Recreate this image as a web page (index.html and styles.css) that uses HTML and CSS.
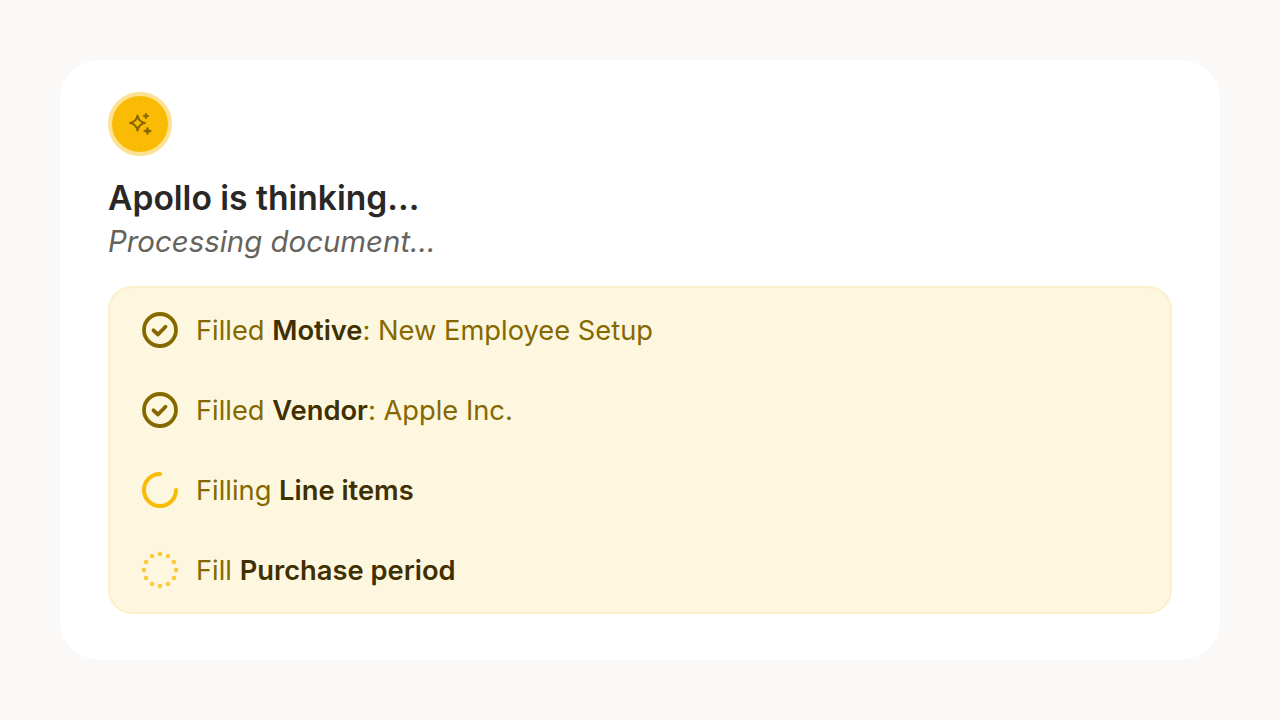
FILE: index.html
```html
<!DOCTYPE html>
<html lang="en">
<head>
    <meta charset="UTF-8">
    <title>Apollo is thinking</title>
    <link rel="stylesheet" href="styles.css">
</head>
<body>
    <div class="card">
        <div class="avatar">
            <svg width="24" height="24" viewBox="0 0 24 24" fill="none">
                <path d="M9.5 3.5 Q10.6 9.9 17 11 Q10.6 12.1 9.5 18.5 Q8.4 12.1 2 11 Q8.4 9.9 9.5 3.5 Z" stroke="#856900" stroke-width="2" stroke-linejoin="round"/>
                <path d="M18 1 Q18.5 3.5 21 4 Q18.5 4.5 18 7 Q17.5 4.5 15 4 Q17.5 3.5 18 1 Z" fill="#856900" stroke="#856900" stroke-width="0.8" stroke-linejoin="round"/>
                <path d="M19.5 15 Q20.2 18.3 23.5 19 Q20.2 19.7 19.5 23 Q18.8 19.7 15.5 19 Q18.8 18.3 19.5 15 Z" fill="#856900" stroke="#856900" stroke-width="0.8" stroke-linejoin="round"/>
            </svg>
        </div>
        <h1 class="title">Apollo is thinking...</h1>
        <p class="subtitle">Processing document...</p>
        <div class="steps">
            <div class="step">
                <svg class="icon" viewBox="0 0 40 40" fill="none">
                    <circle cx="20" cy="20" r="16" stroke="#856900" stroke-width="3.8"/>
                    <path d="M13.5 20.3 L18 24.5 L25.5 16.7" stroke="#856900" stroke-width="3.8" stroke-linecap="round" stroke-linejoin="round"/>
                </svg>
                <span>Filled <b>Motive</b>: New Employee Setup</span>
            </div>
            <div class="step">
                <svg class="icon" viewBox="0 0 40 40" fill="none">
                    <circle cx="20" cy="20" r="16" stroke="#856900" stroke-width="3.8"/>
                    <path d="M13.5 20.3 L18 24.5 L25.5 16.7" stroke="#856900" stroke-width="3.8" stroke-linecap="round" stroke-linejoin="round"/>
                </svg>
                <span>Filled <b>Vendor</b>: Apple Inc.</span>
            </div>
            <div class="step">
                <svg class="icon" viewBox="0 0 40 40" fill="none">
                    <path d="M20 4 A16 16 0 1 0 36 20" stroke="#fabb05" stroke-width="4" stroke-linecap="round"/>
                </svg>
                <span>Filling <b>Line items</b></span>
            </div>
            <div class="step">
                <svg class="icon" viewBox="0 0 40 40" fill="#fcc934">
                    <circle cx="20" cy="4" r="2.2"/>
                    <circle cx="28" cy="6.1" r="2.2"/>
                    <circle cx="33.9" cy="12" r="2.2"/>
                    <circle cx="36" cy="20" r="2.2"/>
                    <circle cx="33.9" cy="28" r="2.2"/>
                    <circle cx="28" cy="33.9" r="2.2"/>
                    <circle cx="20" cy="36" r="2.2"/>
                    <circle cx="12" cy="33.9" r="2.2"/>
                    <circle cx="6.1" cy="28" r="2.2"/>
                    <circle cx="4" cy="20" r="2.2"/>
                    <circle cx="6.1" cy="12" r="2.2"/>
                    <circle cx="12" cy="6.1" r="2.2"/>
                </svg>
                <span>Fill <b>Purchase period</b></span>
            </div>
        </div>
    </div>
</body>
</html>
```

FILE: styles.css
```css
body {
    margin: 0;
    padding: 60px;
    height: 720px;
    box-sizing: border-box;
    background-color: #faf9f7;
    font-family: Inter, sans-serif;
    font-variant-ligatures: no-contextual;
}

.card {
    background-color: #fff;
    border-radius: 40px;
    height: 600px;
    box-sizing: border-box;
    padding: 32px 48px;
}

.avatar {
    width: 64px;
    height: 64px;
    box-sizing: border-box;
    border: 4px solid #fde293;
    border-radius: 50%;
    background-color: #fabb05;
    display: flex;
    align-items: center;
    justify-content: center;
}

.title {
    margin: 20px 0 0;
    font-size: 33.6px;
    line-height: 44px;
    font-weight: 600;
    color: #292826;
}

.subtitle {
    margin: 0;
    font-size: 29.4px;
    line-height: 43px;
    font-style: italic;
    color: #66635c;
}

.steps {
    margin-top: 23px;
    background-color: #fef7e0;
    border: 2px solid #fcf0cc;
    border-radius: 24px;
    padding: 22px 30px;
    display: flex;
    flex-direction: column;
    gap: 40px;
}

.step {
    display: flex;
    align-items: center;
    gap: 16px;
    height: 40px;
    font-size: 27.3px;
    color: #856900;
}

.step b {
    font-weight: 600;
    color: #3f3000;
}

.icon {
    width: 40px;
    height: 40px;
    flex-shrink: 0;
}
```
